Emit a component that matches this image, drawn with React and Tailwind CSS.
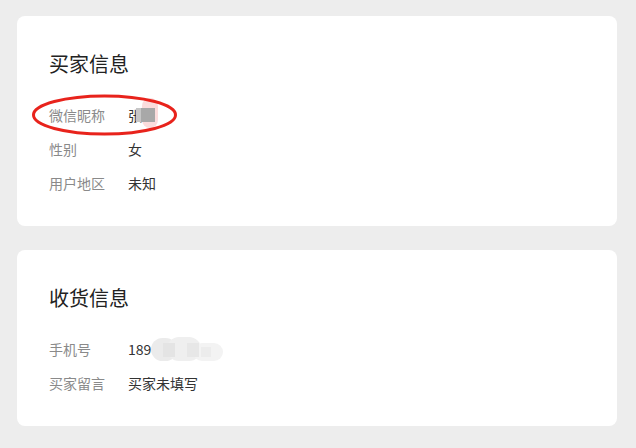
import React from "react";

const font = { fontFamily: '"Noto Sans CJK SC", "Noto Sans", sans-serif' };

const Row = ({ label, children }) => (
  <div className="flex h-[34px] items-center text-[14px]">
    <span className="w-[79px] text-[#8a8a8a]">{label}</span>
    <span className="text-[#333333]">{children}</span>
  </div>
);

const BlurredName = () => (
  <span className="relative inline-block">
    <span>张</span>
    <span className="absolute left-[14px] top-[-7px] h-[30px] w-[16px] rounded-full bg-[#fbdcdc]" />
    <span className="absolute left-[8px] top-[3px] flex h-[14px]">
      <span className="w-[5px] bg-[#c6c6c6]" />
      <span className="w-[14px] bg-[#a8a8a8]" />
    </span>
  </span>
);

const BlurredPhone = () => (
  <span className="inline-flex items-center">
    <span>189</span>
    <span className="relative inline-block h-[24px] w-[72px]">
      <span className="absolute left-0 top-[1px] h-[23px] w-[26px] rounded-full bg-[#ebebeb]" />
      <span className="absolute left-[16px] top-0 h-[24px] w-[34px] rounded-full bg-[#efefef]" />
      <span className="absolute left-[42px] top-[6px] h-[18px] w-[30px] rounded-full bg-[#f3f3f3]" />
      <span className="absolute left-[12px] top-[6px] h-[14px] w-[12px] bg-[#e4e4e4]" />
      <span className="absolute left-[36px] top-[6px] h-[14px] w-[12px] bg-[#e7e7e7]" />
      <span className="absolute left-[50px] top-[10px] h-[10px] w-[10px] bg-[#ececec]" />
    </span>
  </span>
);

const Card = ({ title, children }) => (
  <div className="rounded-lg bg-white px-[32px] pb-[26px] pt-[36px]">
    <h2 className="text-[20px] leading-[24px] text-[#222222]">{title}</h2>
    <div className="mt-[22px]">{children}</div>
  </div>
);

export default function App() {
  return (
    <div
      className="relative flex min-h-[448px] w-[636px] flex-col gap-6 bg-[#ededed] pb-[22px] pl-[17px] pr-[19px] pt-4"
      style={font}
    >
      <Card title="买家信息">
        <Row label="微信昵称">
          <BlurredName />
        </Row>
        <Row label="性别">女</Row>
        <Row label="用户地区">未知</Row>
      </Card>
      <Card title="收货信息">
        <Row label="手机号">
          <BlurredPhone />
        </Row>
        <Row label="买家留言">买家未填写</Row>
      </Card>

      {/* red annotation circle */}
      <svg
        className="pointer-events-none absolute left-0 top-0"
        width="636"
        height="448"
      >
        <ellipse
          cx="104.5"
          cy="115"
          rx="71"
          ry="19"
          fill="none"
          stroke="#e8231c"
          strokeWidth="3"
        />
      </svg>
    </div>
  );
}
